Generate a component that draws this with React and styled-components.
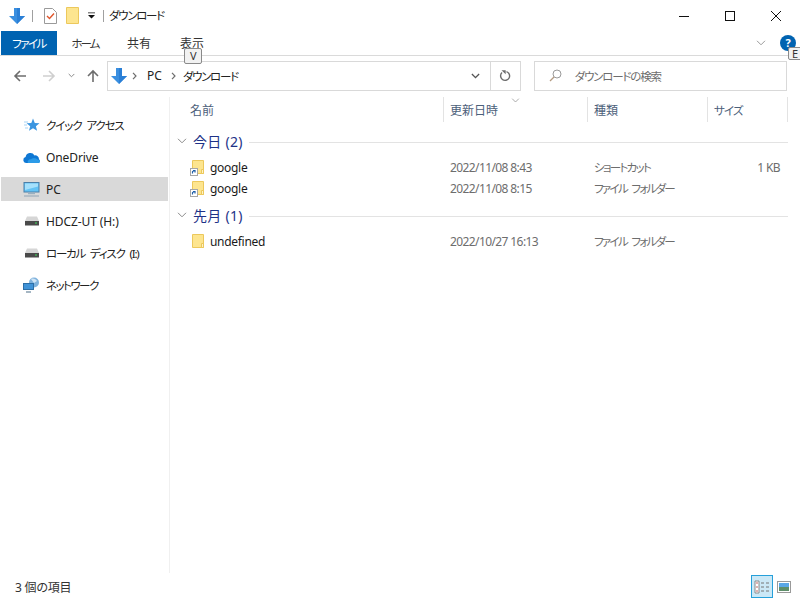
import React from "react";
import styled, { createGlobalStyle } from "styled-components";

const Global = createGlobalStyle`
  html, body { margin: 0; padding: 0; background: #fff; }
  body {
    font-family: "Noto Sans", "Noto Sans CJK JP", sans-serif;
    font-size: 12px;
    color: #1a1a1a;
    font-feature-settings: "palt";
  }
`;

const Kana = styled.span`
  font-size: 11.5px;
  letter-spacing: ${(p) => p.$ls}px;
  word-spacing: 3px;
`;

const Window = styled.div`
  position: relative;
  width: 800px;
  height: 600px;
  overflow: hidden;
  display: flex;
  flex-direction: column;
  background: #fff;
`;

const TitleBar = styled.div`
  height: 31px;
  display: flex;
  align-items: center;
  padding: 0 1px 0 9px;
`;
const QuickSep = styled.div`
  width: 1px;
  height: 12px;
  background: #a0a0a0;
  margin: 0 ${(p) => p.$right}px 0 ${(p) => p.$left}px;
`;
const QuickIcon = styled.svg`
  margin-left: ${(p) => p.$left || 0}px;
  flex: none;
`;
const TitleText = styled.div`
  color: #222;
  flex: 1;
`;
const WinButtons = styled.div`
  display: flex;
  height: 31px;
`;
const WinButton = styled.div`
  width: 46px;
  height: 31px;
  display: flex;
  align-items: center;
  justify-content: center;
`;

const Ribbon = styled.div`
  height: 24px;
  display: flex;
  align-items: stretch;
  border-bottom: 1px solid #dadada;
  padding-left: 1px;
`;
const Tab = styled.div`
  width: ${(p) => p.$w}px;
  display: flex;
  align-items: center;
  justify-content: center;
  font-size: 12px;
  background: ${(p) => (p.$active ? "#0063b1" : "transparent")};
  color: ${(p) => (p.$active ? "#fff" : "#333")};
`;
const RibbonRight = styled.div`
  margin-left: auto;
  display: flex;
  align-items: center;
  padding-right: 4px;
  gap: 14px;
`;
const Help = styled.div`
  width: 16px;
  height: 16px;
  border-radius: 50%;
  background: #0063b1;
  color: #fff;
  font-size: 11px;
  font-weight: 700;
  line-height: 16px;
  text-align: center;
`;
const KeyTip = styled.div`
  position: absolute;
  left: ${(p) => p.$x}px;
  top: ${(p) => p.$y}px;
  width: ${(p) => p.$w}px;
  height: ${(p) => p.$h}px;
  box-sizing: border-box;
  border: 1px solid #8a8a8a;
  border-radius: 2px;
  background: #f2f2f2;
  font-size: 11px;
  line-height: ${(p) => p.$h - 2}px;
  padding-left: ${(p) => p.$pad}px;
  color: #333;
`;

const NavRow = styled.div`
  height: 41px;
  display: flex;
  align-items: center;
  padding: 0 13px 2px 13px;
  box-sizing: border-box;
`;
const NavButtons = styled.div`
  width: 94px;
  display: flex;
  align-items: center;
`;
const NavSlot = styled.div`
  width: ${(p) => p.$w}px;
  display: flex;
  align-items: center;
`;
const AddressBox = styled.div`
  width: 415px;
  height: 30px;
  box-sizing: border-box;
  border: 1px solid #d9d9d9;
  display: flex;
  align-items: center;
  padding-left: 3px;
  font-size: 12px;
  color: #222;
`;
const Crumb = styled.span`
  margin: 0 ${(p) => p.$right}px 0 ${(p) => p.$left}px;
`;
const AddressEnd = styled.div`
  margin-left: auto;
  display: flex;
  height: 100%;
  align-items: center;
`;
const AddressBtn = styled.div`
  width: ${(p) => p.$w}px;
  height: 100%;
  display: flex;
  align-items: center;
  justify-content: center;
  border-left: ${(p) => (p.$line ? "1px solid #d9d9d9" : "none")};
`;
const SearchBox = styled.div`
  width: 254px;
  height: 30px;
  box-sizing: border-box;
  margin-left: 13px;
  border: 1px solid #d9d9d9;
  display: flex;
  align-items: center;
  gap: 13px;
  padding-left: 14px;
  color: #6d6d6d;
  font-size: 12px;
`;

const Body = styled.div`
  flex: 1;
  display: flex;
  min-height: 0;
`;
const Sidebar = styled.div`
  width: 170px;
  box-sizing: border-box;
  border-right: 1px solid #f0f0f0;
  padding: 16px 0 0 1px;
  margin-bottom: 27px;
`;
const NavItem = styled.div`
  width: 167px;
  height: 24px;
  margin-bottom: 8px;
  display: flex;
  align-items: center;
  gap: 6px;
  padding-left: 22px;
  box-sizing: border-box;
  font-size: 12px;
  letter-spacing: -0.1px;
  color: #222;
  background: ${(p) => (p.$selected ? "#d9d9d9" : "transparent")};
`;
const NavIcon = styled.div`
  width: 17px;
  height: 17px;
  display: flex;
  align-items: center;
  justify-content: center;
`;

const Main = styled.div`
  flex: 1;
  position: relative;
`;
const HeaderRow = styled.div`
  height: 25px;
  display: grid;
  grid-template-columns: 274px 144px 120px 80px;
`;
const HeaderCell = styled.div`
  border-right: 1px solid #e3e3e3;
  display: flex;
  align-items: center;
  padding-left: ${(p) => p.$pad || 6}px;
  color: #4c607a;
  font-size: 12px;
`;
const SortCaret = styled.div`
  position: absolute;
  left: 341px;
  top: 1px;
  display: flex;
`;
const Group = styled.div`
  height: 21px;
  display: flex;
  align-items: center;
  margin-top: ${(p) => p.$top}px;
  padding-left: 7px;
  color: #1e3287;
  font-size: 14px;
`;
const GroupLabel = styled.span`
  margin: 0 6px 0 6px;
  letter-spacing: 0.3px;
`;
const GroupLine = styled.div`
  flex: 1;
  height: 1px;
  background: #e3e3e3;
  margin: 4px 12px 0 0;
`;
const FileRow = styled.div`
  height: 21px;
  display: grid;
  grid-template-columns: 274px 144px 120px 72px;
  align-items: center;
  margin-top: ${(p) => p.$top || 0}px;
`;
const NameCell = styled.div`
  display: flex;
  align-items: center;
  padding-left: 20px;
  gap: 4px;
  color: #1a1a1a;
  letter-spacing: -0.3px;
`;
const InfoCell = styled.div`
  padding-left: 6px;
  color: #6d6d6d;
  letter-spacing: ${(p) => (p.$tight ? "-0.6px" : "0")};
  text-align: ${(p) => (p.$right ? "right" : "left")};
`;

const StatusBar = styled.div`
  height: 27px;
  display: flex;
  align-items: center;
  padding: 0 5px 0 15px;
  margin-top: -27px;
  font-size: 12px;
  letter-spacing: -0.2px;
  color: #333;
`;
const StatusViews = styled.div`
  margin-left: auto;
  display: flex;
  align-items: center;
`;
const ViewBtn = styled.div`
  width: 22px;
  height: 23px;
  box-sizing: border-box;
  display: flex;
  align-items: center;
  justify-content: center;
  border: ${(p) => (p.$active ? "1px solid #26a0da" : "1px solid transparent")};
  background: ${(p) => (p.$active ? "#cbe8f6" : "transparent")};
`;

const DownArrow = () => (
  <svg width="16" height="16" viewBox="0 0 16 16">
    <path d="M5 0h6v8h5l-8 8-8-8h5z" fill="#3a8fe0" />
    <path d="M8 0h3v8h5l-8 8z" fill="#2a7fd6" />
  </svg>
);

const Folder = ({ shortcut }) => (
  <svg width="16" height="17" viewBox="0 0 16 17">
    <path d="M2.500 1.500h11v13h-11z" fill="#fde58f" stroke="#ecc85c" />
    <path d="M11.500 10.500h2v4h-2z" fill="#fff3c4" stroke="#ecc85c" />
    {shortcut && (
      <g>
        <rect x="0.500" y="9.500" width="7" height="7" fill="#fff" stroke="#a6a6a6" />
        <path d="M2.500 14.500v-2l2-1M3 11.500h2v2" fill="none" stroke="#1f5fa8" strokeWidth="1.2" />
      </g>
    )}
  </svg>
);

const Chevron = ({ color = "#9a9a9a", w = 10, h = 6, sw = 1 }) => (
  <svg width={w} height={h} viewBox="0 0 10 6">
    <path d="M1 .8l4 4 4-4" fill="none" stroke={color} strokeWidth={sw} />
  </svg>
);

const Crumbarrow = () => (
  <svg width="5" height="8" viewBox="0 0 5 8">
    <path d="M1 .8L4 4 1 7.200" fill="none" stroke="#6d6d6d" strokeWidth="1.2" />
  </svg>
);

const NavArrow = ({ dir, color }) => (
  <svg width="14" height="14" viewBox="0 0 14 14">
    {dir === "left" && <path d="M13 7H2M7 2L2 7l5 5" fill="none" stroke={color} strokeWidth="1.6" />}
    {dir === "right" && <path d="M1 7h11M7 2l5 5-5 5" fill="none" stroke={color} strokeWidth="1.6" />}
    {dir === "up" && <path d="M7 13V2M2 7l5-5 5 5" fill="none" stroke={color} strokeWidth="1.6" />}
  </svg>
);

const Drive = () => (
  <svg width="16" height="10" viewBox="0 0 16 10">
    <path d="M3 .5h10L15 5H1z" fill="#d6d6d6" />
    <rect x="1" y="5" width="14" height="4.500" fill="#4a4a4a" />
    <rect x="11" y="6.500" width="2" height="1" fill="#3ddc5a" />
  </svg>
);

const Monitor = () => (
  <svg width="17" height="16" viewBox="0 0 17 16">
    <rect x="1" y="1.500" width="15" height="9.500" fill="#63c3f5" stroke="#4a7fa8" />
    <path d="M2 2.500h13v3L2 9z" fill="#a5e0fb" />
    <path d="M5 12.500h7" stroke="#9ab0c0" strokeWidth="1.4" />
    <path d="M1 15h15" stroke="#8fa4b5" />
  </svg>
);

const sections = [
  {
    title: "今日 (2)",
    top: 8,
    rowsTop: 6,
    rows: [
      { name: "google", date: "2022/11/08 8:43", kind: "ショートカット", size: "1 KB", shortcut: true },
      { name: "google", date: "2022/11/08 8:15", kind: "ファイル フォルダー", shortcut: true },
    ],
  },
  {
    title: "先月 (1)",
    top: 5,
    rowsTop: 6,
    rows: [{ name: "undefined", date: "2022/10/27 16:13", kind: "ファイル フォルダー" }],
  },
];

export default function App() {
  return (
    <Window>
      <Global />
      <TitleBar>
        <DownArrow />
        <QuickSep $left={7} $right={11} />
        <QuickIcon width="13" height="16" viewBox="0 0 13 16">
          <path d="M.5.5h8l4 4v11H.5z" fill="#fff" stroke="#9a9a9a" />
          <path d="M3 8l2.500 2.500L10 5.500" fill="none" stroke="#e0552b" strokeWidth="1.4" />
        </QuickIcon>
        <QuickIcon $left={9} width="13" height="17" viewBox="0 0 13 17">
          <path d="M.5.5h12v16H.5z" fill="#fde58f" stroke="#ecc85c" />
        </QuickIcon>
        <QuickIcon $left={9} width="7" height="7" viewBox="0 0 8 7">
          <path d="M0 0h8v1H0zM0 3h8L4 7z" fill="#111" />
        </QuickIcon>
        <QuickSep $left={8} $right={5} />
        <TitleText><Kana $ls={-1.3}>ダウンロード</Kana></TitleText>
        <WinButtons>
          <WinButton>
            <svg width="10" height="10"><path d="M0 5.500h10" stroke="#111" /></svg>
          </WinButton>
          <WinButton>
            <svg width="10" height="10"><rect x=".5" y=".5" width="9" height="9" fill="none" stroke="#111" /></svg>
          </WinButton>
          <WinButton>
            <svg width="10" height="10"><path d="M0 0l10 10M10 0L0 10" stroke="#111" /></svg>
          </WinButton>
        </WinButtons>
      </TitleBar>

      <Ribbon>
        <Tab $w={56} $active><Kana $ls={-1.5}>ファイル</Kana></Tab>
        <Tab $w={56}><Kana $ls={-1.9}>ホーム</Kana></Tab>
        <Tab $w={52}>共有</Tab>
        <Tab $w={54}>表示</Tab>
        <RibbonRight>
          <Chevron />
          <Help>?</Help>
        </RibbonRight>
      </Ribbon>
      <KeyTip $x={184} $y={48} $w={18} $h={16} $pad={5}>V</KeyTip>
      <KeyTip $x={788} $y={47} $w={14} $h={13} $pad={3}>E</KeyTip>

      <NavRow>
        <NavButtons>
          <NavSlot $w={29}><NavArrow dir="left" color="#6d6d6d" /></NavSlot>
          <NavSlot $w={26}><NavArrow dir="right" color="#cfcfcf" /></NavSlot>
          <NavSlot $w={18}><Chevron color="#888" w={7} h={5} sw={1.4} /></NavSlot>
          <NavSlot $w={21}><NavArrow dir="up" color="#6d6d6d" /></NavSlot>
        </NavButtons>
        <AddressBox>
          <DownArrow />
          <Crumb $left={5} $right={10}><Crumbarrow /></Crumb>
          <span>PC</span>
          <Crumb $left={9} $right={7}><Crumbarrow /></Crumb>
          <Kana $ls={-1.3}>ダウンロード</Kana>
          <AddressEnd>
            <AddressBtn $w={28}><Chevron color="#555" w={9} h={6} sw={1.5} /></AddressBtn>
            <AddressBtn $w={29} $line>
              <svg width="12" height="13" viewBox="0 0 12 13">
                <path d="M7.500 2.600A4.500 4.500 0 1 1 3 3.600" fill="none" stroke="#6d6d6d" strokeWidth="1.4" />
                <path d="M2.500 1.200h4.200v4z" fill="#6d6d6d" />
              </svg>
            </AddressBtn>
          </AddressEnd>
        </AddressBox>
        <SearchBox>
          <svg width="13" height="13" viewBox="0 0 13 13">
            <circle cx="8" cy="5" r="4" fill="none" stroke="#9a9a9a" />
            <path d="M5 8l-4 4" stroke="#b39a80" strokeWidth="1.2" />
          </svg>
          <Kana $ls={-1.2}>ダウンロードの検索</Kana>
        </SearchBox>
      </NavRow>

      <Body>
        <Sidebar>
          <NavItem>
            <NavIcon>
              <svg width="16" height="15" viewBox="0 0 16 15">
                <path d="M9 .5l1.800 4.400 4.700.3-3.600 3 1.200 4.600L9 10.300l-4 2.500 1.200-4.600-3.600-3 4.700-.3z" fill="#3a95e0" />
                <path d="M0 4h4M0 7h3M1 10h3" stroke="#a6d3f5" />
              </svg>
            </NavIcon>
            <Kana $ls={-1.1}>クイック アクセス</Kana>
          </NavItem>
          <NavItem>
            <NavIcon>
              <svg width="17" height="11" viewBox="0 0 17 11">
                <path d="M3 11a3 3 0 0 1-.4-5.900A4.800 4.800 0 0 1 11.500 3.400 3.800 3.800 0 0 1 16 7.200c.7.6 1 1.200 1 2 0 1-.8 1.800-2 1.800z" fill="#0f78d4" />
                <path d="M5 11c-1-2 1-4 3-3.600 1.400-1.600 5-1.400 6.500 0C16 7.500 17 8.200 17 9.200c0 1-.8 1.800-2 1.800z" fill="#2b9be8" />
              </svg>
            </NavIcon>
            OneDrive
          </NavItem>
          <NavItem $selected>
            <NavIcon><Monitor /></NavIcon>
            PC
          </NavItem>
          <NavItem>
            <NavIcon><Drive /></NavIcon>
            HDCZ-UT (H:)
          </NavItem>
          <NavItem>
            <NavIcon><Drive /></NavIcon>
            <Kana $ls={-1.2}>ローカル ディスク (I:)</Kana>
          </NavItem>
          <NavItem>
            <NavIcon>
              <svg width="17" height="16" viewBox="0 0 17 16">
                <circle cx="11" cy="5.500" r="5" fill="#7fb2dc" />
                <path d="M8 2c2-1 5 0 6 2l-3 2z" fill="#cfe4f5" />
                <rect x=".5" y="6.500" width="10" height="6" fill="#3f93d8" stroke="#2c6ea6" />
                <path d="M3 15h5" stroke="#7f97aa" strokeWidth="1.4" />
              </svg>
            </NavIcon>
            <Kana $ls={-1.5}>ネットワーク</Kana>
          </NavItem>
        </Sidebar>

        <Main>
          <SortCaret><Chevron w={9} h={5} /></SortCaret>
          <HeaderRow>
            <HeaderCell $pad={20}>名前</HeaderCell>
            <HeaderCell>更新日時</HeaderCell>
            <HeaderCell>種類</HeaderCell>
            <HeaderCell><Kana $ls={-0.9}>サイズ</Kana></HeaderCell>
          </HeaderRow>
          {sections.map((s) => (
            <React.Fragment key={s.title}>
              <Group $top={s.top}>
                <Chevron color="#8a8a8a" />
                <GroupLabel>{s.title}</GroupLabel>
                <GroupLine />
              </Group>
              {s.rows.map((r, i) => (
                <FileRow key={r.date} $top={i === 0 ? s.rowsTop : 0}>
                  <NameCell>
                    <Folder shortcut={r.shortcut} />
                    {r.name}
                  </NameCell>
                  <InfoCell $tight>{r.date}</InfoCell>
                  <InfoCell><Kana $ls={-1.7}>{r.kind}</Kana></InfoCell>
                  <InfoCell $right $tight>{r.size}</InfoCell>
                </FileRow>
              ))}
            </React.Fragment>
          ))}
        </Main>
      </Body>

      <StatusBar>
        3 個の項目
        <StatusViews>
          <ViewBtn $active>
            <svg width="16" height="14" viewBox="0 0 16 14">
              <path d="M1 1h4v12H1z" fill="#fff" stroke="#8a8a8a" />
              <path d="M2.500 3h1M2.500 7h1M2.500 11h1" stroke="#a33" strokeWidth="1.4" />
              <path d="M7 3h3M12 3h3M7 7h3M12 7h3M7 11h3M12 11h3" stroke="#777" />
            </svg>
          </ViewBtn>
          <ViewBtn>
            <svg width="14" height="12" viewBox="0 0 14 12">
              <rect x=".5" y=".5" width="13" height="11" fill="#fff" stroke="#9a9a9a" />
              <rect x="2" y="2" width="10" height="4" fill="#5aa7e6" />
              <rect x="2" y="6" width="10" height="4" fill="#5f8f6a" />
            </svg>
          </ViewBtn>
        </StatusViews>
      </StatusBar>
    </Window>
  );
}
